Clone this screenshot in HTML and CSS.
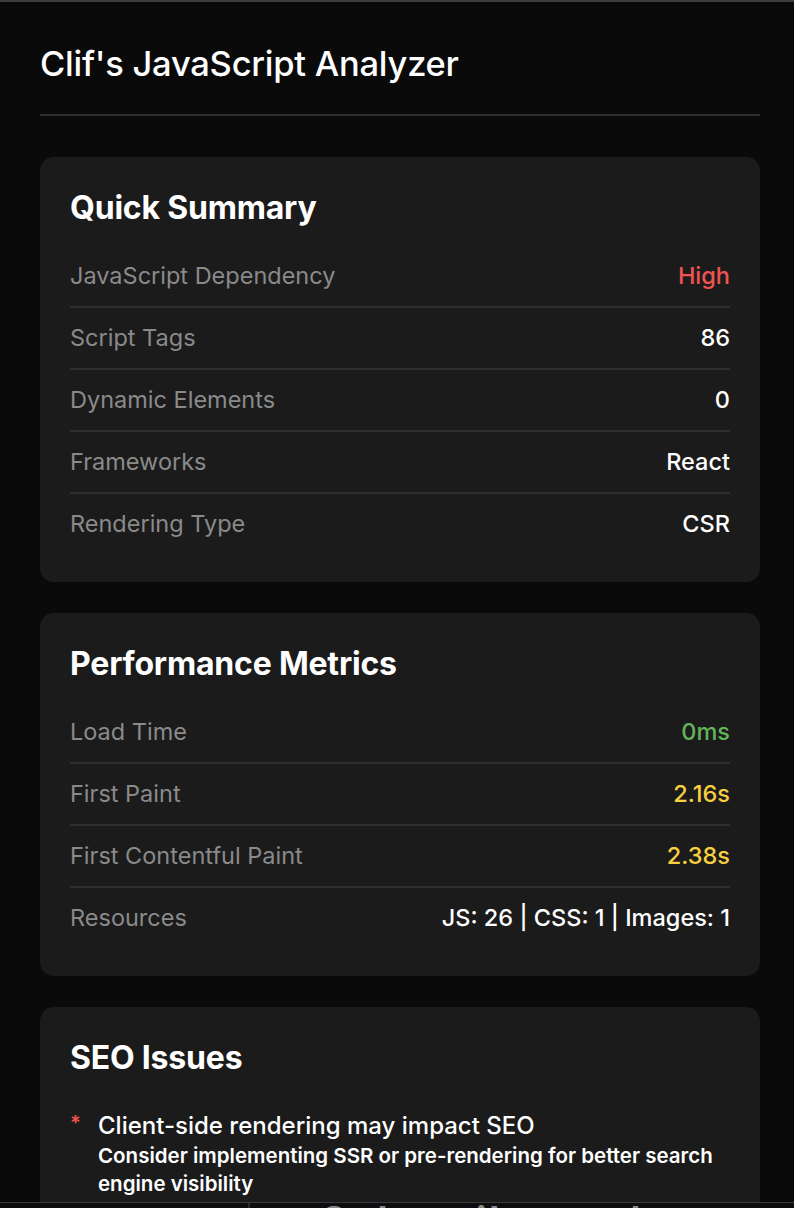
FILE: index.html
```html
<!DOCTYPE html>
<html lang="en">
<head>
<meta charset="utf-8">
<title>Clif's JavaScript Analyzer</title>
<link rel="stylesheet" href="styles.css">
</head>
<body>
<div class="panel">
  <h1 class="title">Clif's JavaScript Analyzer</h1>

  <section class="card">
    <h2 class="card-title">Quick Summary</h2>
    <div class="row"><span class="label">JavaScript Dependency</span><span class="value red">High</span></div>
    <div class="row"><span class="label">Script Tags</span><span class="value">86</span></div>
    <div class="row"><span class="label">Dynamic Elements</span><span class="value">0</span></div>
    <div class="row"><span class="label">Frameworks</span><span class="value">React</span></div>
    <div class="row"><span class="label">Rendering Type</span><span class="value">CSR</span></div>
  </section>

  <section class="card">
    <h2 class="card-title">Performance Metrics</h2>
    <div class="row"><span class="label">Load Time</span><span class="value green">0ms</span></div>
    <div class="row"><span class="label">First Paint</span><span class="value yellow">2.16s</span></div>
    <div class="row"><span class="label">First Contentful Paint</span><span class="value yellow">2.38s</span></div>
    <div class="row"><span class="label">Resources</span><span class="value">JS: 26 | CSS: 1 | Images: 1</span></div>
  </section>

  <section class="card">
    <h2 class="card-title">SEO Issues</h2>
    <ul class="issues">
      <li class="issue">
        <span class="star">*</span>
        <div class="issue-body">
          <div class="issue-title">Client-side rendering may impact SEO</div>
          <div class="issue-desc">Consider implementing SSR or pre-rendering for better search engine visibility</div>
        </div>
      </li>
    </ul>
  </section>
</div>

<div class="under">
  <div class="under-side"></div>
  <div class="under-text">Subscribe to the</div>
</div>
</body>
</html>
```

FILE: styles.css
```css
html, body {
  margin: 0;
  padding: 0;
  height: 1208px;
  overflow: hidden;
}

body {
  background: #0a0a0a;
  border-top: 2px solid #3d3d3d;
  box-sizing: border-box;
  font-family: Inter, "Noto Sans", "Liberation Sans", sans-serif;
  color: #ffffff;
}

.panel {
  padding: 0 34px 0 40px;
  width: 720px;
}

.title {
  margin: 0;
  padding-top: 42px;
  padding-bottom: 30px;
  font-size: 34.5px;
  line-height: 40px;
  font-weight: 500;
  letter-spacing: -0.25px;
  border-bottom: 2px solid #2c2c2c;
}

.card {
  background: #1b1b1b;
  border-radius: 14px;
  padding: 32px 30px 28px;
  margin-top: 41px;
}

.card + .card {
  margin-top: 31px;
}

.card-title {
  margin: 0 0 19px;
  font-size: 32px;
  line-height: 38px;
  font-weight: 700;
  letter-spacing: -0.2px;
}

.row {
  display: flex;
  justify-content: space-between;
  align-items: center;
  padding: 15px 0;
  line-height: 30px;
  font-size: 23.5px;
  border-bottom: 2px solid #2e2e2e;
}

.row:last-child {
  border-bottom: none;
}

.label {
  color: #8a8a8a;
}

.value {
  color: #ffffff;
  font-weight: 500;
}

.value-wide {
  letter-spacing: 0.2px;
}

.red { color: #ef5350; }
.green { color: #63b35a; }
.yellow { color: #f8cf3f; }

.issues {
  list-style: none;
  margin: 0;
  padding: 15px 0 0 0;
}

.issue {
  display: flex;
  gap: 19px;
}

.star {
  color: #ef5350;
  font-size: 20px;
  line-height: 24px;
  font-weight: 600;
  width: 9px;
}

.issue-title {
  font-size: 24px;
  line-height: 30px;
  font-weight: 500;
}

.issue-desc {
  font-size: 20.5px;
  line-height: 28px;
  font-weight: 600;
  padding-top: 1px;
}

.under {
  position: fixed;
  left: 0;
  right: 0;
  bottom: 0;
  height: 5px;
  background: #0d0d10;
  border-top: 1px solid #3a3a3a;
  overflow: hidden;
  display: flex;
}

.under-side {
  width: 248px;
  border-right: 2px solid #2a2a2a;
  flex: none;
}

.under-text {
  margin-left: 70px;
  margin-top: -2px;
  font-size: 42px;
  line-height: 42px;
  font-weight: 600;
  color: #8a8a8a;
  letter-spacing: 2px;
  white-space: nowrap;
}
```
